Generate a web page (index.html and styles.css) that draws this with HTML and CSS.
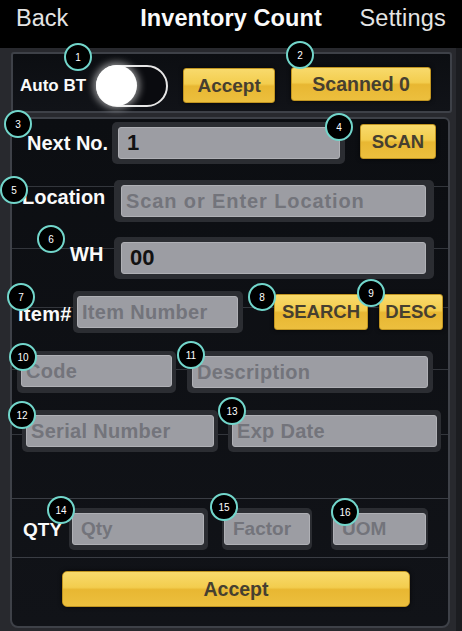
FILE: index.html
```html
<!DOCTYPE html>
<html>
<head>
<meta charset="utf-8">
<link rel="stylesheet" href="styles.css">
</head>
<body>
<div class="header">
  <span class="back">Back</span>
  <span class="title">Inventory Count</span>
  <span class="settings">Settings</span>
</div>
<div class="frame">
  <div class="panel top-panel">
    <span class="lbl lbl-auto">Auto BT</span>
    <div class="toggle"><div class="knob"></div></div>
    <div class="btn btn-accept-sm">Accept</div>
    <div class="btn btn-scanned">Scanned 0</div>
  </div>
  <div class="panel main-panel">
    <div class="row r1">
      <span class="lbl lbl-next">Next No.</span>
      <div class="field f-next"><div class="input value">1</div></div>
      <div class="btn btn-scan">SCAN</div>
    </div>
    <div class="row r2">
      <span class="lbl lbl-loc">Location</span>
      <div class="field f-wide"><div class="input ph ph-loc">Scan or Enter Location</div></div>
    </div>
    <div class="row r3">
      <span class="lbl lbl-wh">WH</span>
      <div class="field f-wide"><div class="input value">00</div></div>
    </div>
    <div class="row r4">
      <span class="lbl lbl-item">Item#</span>
      <div class="field f-item"><div class="input ph">Item Number</div></div>
      <div class="btn btn-search">SEARCH</div>
      <div class="btn btn-desc">DESC</div>
    </div>
    <div class="row r5">
      <div class="field f-code"><div class="input ph">Code</div></div>
      <div class="field f-descr"><div class="input ph">Description</div></div>
    </div>
    <div class="row r6">
      <div class="field f-serial"><div class="input ph">Serial Number</div></div>
      <div class="field f-exp"><div class="input ph">Exp Date</div></div>
    </div>
    <div class="spacer"></div>
    <div class="row r7">
      <span class="lbl lbl-qty">QTY</span>
      <div class="field f-qty"><div class="input ph ph-sm">Qty</div></div>
      <div class="field f-factor"><div class="input ph ph-sm">Factor</div></div>
      <div class="field f-uom"><div class="input ph ph-sm">UOM</div></div>
    </div>
    <div class="row r8">
      <div class="btn btn-accept-lg">Accept</div>
    </div>
  </div>
</div>
<div class="badges">
  <span class="badge b1">1</span>
  <span class="badge b2">2</span>
  <span class="badge b3">3</span>
  <span class="badge b4">4</span>
  <span class="badge b5">5</span>
  <span class="badge b6">6</span>
  <span class="badge b7">7</span>
  <span class="badge b8">8</span>
  <span class="badge b9">9</span>
  <span class="badge b10">10</span>
  <span class="badge b11">11</span>
  <span class="badge b12">12</span>
  <span class="badge b13">13</span>
  <span class="badge b14">14</span>
  <span class="badge b15">15</span>
  <span class="badge b16">16</span>
</div>
</body>
</html>
```

FILE: styles.css
```css
* { box-sizing: border-box; }
html, body { margin: 0; padding: 0; }
body {
  width: 462px;
  height: 631px;
  overflow: hidden;
  position: relative;
  background: linear-gradient(to right, #28292e 0, #28292e 456px, #1c1d21 456px);
  font-family: "Liberation Sans", Arial, sans-serif;
  color: #fff;
}

.header {
  height: 48px;
  background: #000;
  display: grid;
  grid-template-columns: 1fr auto 1fr;
  align-items: start;
  padding: 4px 16px 0 16px;
  line-height: 29px;
}
.back { font-size: 23.5px; color: #e4e4e4; justify-self: start; }
.title { font-size: 23.5px; font-weight: bold; color: #fafafa; letter-spacing: 0.1px; }
.settings { font-size: 23.5px; color: #e4e4e4; justify-self: end; letter-spacing: 0.2px; }

.frame {
  padding-top: 4px;
}
.panel {
  background: linear-gradient(#0c0e12, #111318);
  border: 2px solid #3e4148;
}
.top-panel {
  margin-left: 11px;
  width: 441px;
  height: 61px;
  display: flex;
  align-items: center;
  padding: 6px 0 0 7px;
  border-radius: 3px;
}
.main-panel {
  margin-top: 4px;
  margin-left: 10px;
  width: 440px;
  height: 511px;
  border-radius: 6px 6px 8px 8px;
  display: flex;
  flex-direction: column;
}

.lbl { font-weight: bold; color: #fafafa; white-space: nowrap; }
.lbl-auto { font-size: 17px; }
.toggle {
  margin-left: 10px;
  width: 72px;
  height: 42px;
  border: 2px solid #e6e6e6;
  border-radius: 21px;
  background: #0a0b0f;
  display: flex;
  align-items: center;
}
.knob {
  width: 41px;
  height: 41px;
  margin-left: -2px;
  border-radius: 50%;
  background: #fff;
  box-shadow: 0 0 7px 3px rgba(255,255,255,0.5);
}

.btn {
  display: flex;
  align-items: center;
  justify-content: center;
  font-weight: bold;
  color: #463f30;
  border: 1px solid #c19521;
  border-radius: 3px;
  background: linear-gradient(#f8da6c 0%, #f3cd4e 45%, #e8b732 52%, #ecbf3e 100%);
  box-shadow: 0 0 4px rgba(0,0,0,0.7);
  white-space: nowrap;
}
.btn-accept-sm { margin-left: 15px; width: 92px; height: 35px; font-size: 19px; }
.btn-scanned { margin-left: 16px; width: 140px; height: 34px; font-size: 19.5px; margin-bottom: 3px; }
.btn-scan { margin-left: 15px; width: 76px; height: 35px; font-size: 18.5px; }
.btn-search { margin-left: 31px; width: 94px; height: 36px; font-size: 18.5px; }
.btn-desc { margin-left: 11px; width: 64px; height: 36px; font-size: 18.5px; }
.btn-accept-lg { width: 348px; height: 36px; font-size: 19.5px; border-radius: 5px; }

.row {
  display: flex;
  align-items: center;
  flex: none;
}
.row > * { flex: none; }
.r1 { height: 53px; padding: 3px 0 8px 15px; align-items: flex-start; }
.r2 { height: 57px; padding: 8px 0 7px 10px; align-items: flex-start;
  background: linear-gradient(transparent 14px, #33363c 14px, #33363c 15px, transparent 15px); }
.r3 { height: 57px; padding: 8px 0 7px 58px; align-items: flex-start;
  background: linear-gradient(transparent 19px, #33363c 19px, #33363c 20px, transparent 20px); }
.r4 { height: 57px; padding: 5px 0 10px 6px; align-items: flex-start;
  background: linear-gradient(transparent 21px, #33363c 21px, #33363c 22px, transparent 22px); }
.r5 { height: 58px; padding: 8px 0 8px 5px; align-items: flex-start;
  background: linear-gradient(transparent 26px, #33363c 26px, #33363c 27px, transparent 27px); }
.r6 { height: 59px; padding: 9px 0 8px 10px; align-items: flex-start;
  background: linear-gradient(transparent 33px, #33363c 33px, #33363c 34px, transparent 34px); }
.spacer { height: 38px; flex: none; }
.r7 { height: 60px; padding: 9px 0 0 11px; align-items: flex-start;
  border-top: 1px solid #3a3d44; border-bottom: 1px solid #3a3d44; }
.r8 { height: 67px; padding: 13px 0 0 50px; align-items: flex-start; }

.r1 .lbl, .r2 .lbl, .r3 .lbl, .r4 .lbl, .r7 .lbl { height: 42px; display: flex; align-items: center; }
.r1 .btn { margin-top: 2px; }
.r4 .btn { margin-top: 3px; }

.lbl-next { width: 85px; font-size: 20px; }
.lbl-loc { width: 92px; font-size: 20px; padding-bottom: 7px; }
.lbl-wh { width: 44px; font-size: 20px; padding-bottom: 7px; }
.lbl-item { width: 55px; font-size: 20px; padding-top: 5px; letter-spacing: 0.3px; }
.lbl-qty { width: 46px; font-size: 19px; padding-top: 2px; }

.field {
  height: 42px;
  padding: 5px;
  background: #2b2d32;
  border-radius: 5px;
}
.input {
  height: 32px;
  background: #9c9da3;
  border: 1px solid #afb0b5;
  border-radius: 3px;
  display: flex;
  align-items: center;
  padding-left: 4px;
  font-weight: bold;
  font-size: 20px;
  white-space: nowrap;
  overflow: hidden;
}
.ph { color: #73747b; letter-spacing: 0.3px; }
.ph-loc { letter-spacing: 0.9px; }
.ph-sm { font-size: 19px; padding-left: 8px; letter-spacing: 0; }
.value { color: #121212; font-size: 22px; padding-left: 8px; }

.f-next { width: 233px; padding: 5px 5px 5px 6px; }
.f-wide { width: 320px; padding: 5px 8px 5px 7px; }
.f-item { width: 170px; padding: 5px 5px 5px 4px; }
.f-code { width: 159px; padding: 4px 4px 5px 4px; }
.f-descr { width: 246px; margin-left: 11px; }
.f-serial { width: 196px; padding: 5px 4px; }
.f-exp { width: 213px; margin-left: 10px; padding: 5px 4px; }
.f-qty { width: 139px; padding: 5px 4px 5px 3px; }
.f-factor { width: 90px; margin-left: 14px; padding: 5px 2px; }
.f-uom { width: 97px; margin-left: 19px; padding: 5px 2px; }

.badges {
  position: absolute;
  left: 0;
  top: 0;
  width: 462px;
  height: 631px;
  pointer-events: none;
}
.badge {
  position: absolute;
  width: 28px;
  height: 28px;
  border: 2px solid #72d6cb;
  border-radius: 50%;
  background: #000;
  color: #fff;
  font-family: "Liberation Sans", Arial, sans-serif;
  font-size: 10px;
  display: flex;
  align-items: center;
  justify-content: center;
}
.b1 { left: 64px; top: 43px; }
.b2 { left: 286px; top: 41px; }
.b3 { left: 4px; top: 110px; }
.b4 { left: 325px; top: 113px; }
.b5 { left: 0px; top: 176px; }
.b6 { left: 37px; top: 225px; }
.b7 { left: 7px; top: 283px; }
.b8 { left: 248px; top: 283px; }
.b9 { left: 357px; top: 279px; }
.b10 { left: 9px; top: 343px; }
.b11 { left: 177px; top: 341px; }
.b12 { left: 8px; top: 401px; }
.b13 { left: 218px; top: 397px; }
.b14 { left: 47px; top: 496px; }
.b15 { left: 210px; top: 493px; }
.b16 { left: 331px; top: 498px; }
```
